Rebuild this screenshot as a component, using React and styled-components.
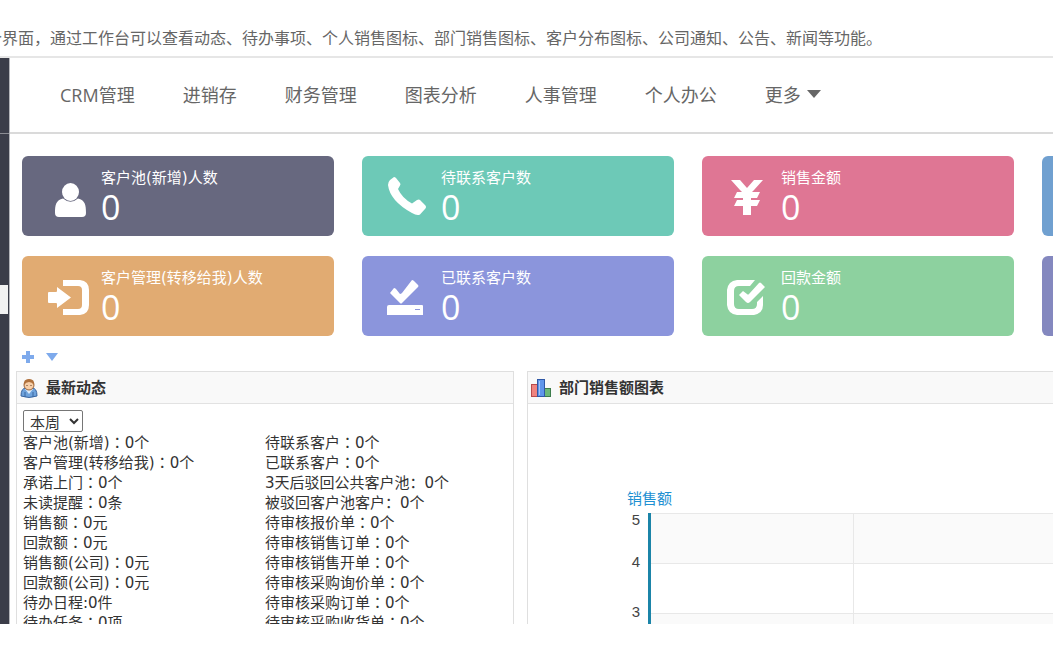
import React, { useState } from "react";
import styled, { createGlobalStyle } from "styled-components";

const navItems = ["CRM管理", "进销存", "财务管理", "图表分析", "人事管理", "个人办公"];

const cards = [
  { label: "客户池(新增)人数", value: 0, color: "#67687f", icon: "user" },
  { label: "待联系客户数", value: 0, color: "#6dc9b7", icon: "phone" },
  { label: "销售金额", value: 0, color: "#df7694", icon: "yen" },
  { label: "", value: "", color: "#70a0d0" },
  { label: "客户管理(转移给我)人数", value: 0, color: "#e1ab72", icon: "login" },
  { label: "已联系客户数", value: 0, color: "#8b95dc", icon: "saved" },
  { label: "回款金额", value: 0, color: "#8dd19f", icon: "check" },
  { label: "", value: "", color: "#8488bf" },
];

// [label, separator, value]
const leftRows = [
  ["客户池(新增)", "wide", "0个"],
  ["客户管理(转移给我)", "wide", "0个"],
  ["承诺上门", "wide", "0个"],
  ["未读提醒", "wide", "0条"],
  ["销售额", "wide", "0元"],
  ["回款额", "wide", "0元"],
  ["销售额(公司)", "wide", "0元"],
  ["回款额(公司)", "wide", "0元"],
  ["待办日程", "ascii", "0件"],
  ["待办任务", "wide", "0项"],
];

const rightRows = [
  ["待联系客户", "wide", "0个"],
  ["已联系客户", "wide", "0个"],
  ["3天后驳回公共客户池", "left", "0个"],
  ["被驳回客户池客户", "left", "0个"],
  ["待审核报价单", "wide", "0个"],
  ["待审核销售订单", "wide", "0个"],
  ["待审核销售开单", "wide", "0个"],
  ["待审核采购询价单", "wide", "0个"],
  ["待审核采购订单", "wide", "0个"],
  ["待审核采购收货单", "wide", "0个"],
];

// white glyphs shown on the stat cards
const cardIcons = {
  user: (
    <>
      <path d="M17 24.500 C10 26 9 31 9 39 Q9 43 13 43 H36 Q40 43 40 39 C40 31 39 26 32 24.500 Q24.500 31 17 24.500 Z" />
      <ellipse cx="24.500" cy="18" rx="8.500" ry="9" />
    </>
  ),
  phone: (
    <path d="M8 3 Q9 3 10 4 L14 9 Q15 10 14 11.500 L12 15 Q16 24 26 29.500 L31 26 Q33 25 34 26 L39 31 Q41 33 39 35 L34 40.500 Q31 42 26 39 Q4 27 2 11 Q2 8 4 6 Z" />
  ),
  yen: (
    <path d="M5 6 H14 L21 14 L28 6 H37 L28 16 L26 18 H34 L31 24 H25 V26 H34 L31 32 H25 V41 H17 V32 H8 L11 26 H17 V24 H8 L11 18 H16 L14 16 Z" />
  ),
  login: (
    <>
      <path d="M3 18 H10 Q11 18 11 17 V13 L25 23.500 L11 34 V30 Q11 29 10 29 H3 Q2 29 2 28 V19 Q2 18 3 18 Z" />
      <path d="M17 6 H34 Q43 7 43 16 V31 Q43 40 34 41 H17 V35 H32 Q36 35 36 31 V16 Q36 12 32 12 H17 Z" />
    </>
  ),
  saved: (
    <>
      <path d="M26 6 Q27 6 28 7 L32 11 Q33 12 32 13 L16 29 Q15 30 14 29 L4 19 L8 14 Q9 14 10 15 L14 20 Q15 20 16 19 Z" />
      <path fillRule="evenodd" d="M3 31 H36 Q37 31 37 32 V41 H1 V33 Q1 31 3 31 Z M29 35 V36 H34 V35 Z" />
    </>
  ),
  check: (
    <>
      <path d="M11 6 H29 L24 12 H13 Q8 12 8 17 V30 Q8 35 13 35 H26 Q31 35 31 30 V28 L37 22 V31 Q37 39 28 41 H11 Q2 40 1 31 V16 Q2 7 11 6 Z" />
      <path d="M33 9 Q34 8 35 9 L39 13 L24 28 Q22 30 20 28 L13 21 L17 17 L21 20 Q22 21 23 20 Z" />
    </>
  ),
};

function PersonIcon() {
  return (
    <svg width="18" height="20" viewBox="0 0 18 20" aria-hidden="true">
      <path d="M1 18 Q1 10 6 10 H12 Q17 10 17 18 Q9 21 1 18 Z" fill="#6fa3dc" stroke="#3b66a0" />
      <path d="M5 11 L9 16 L13 11 Z" fill="#dcecfb" />
      <path d="M5 14 V19 M13 14 V19" stroke="#3b66a0" />
      <ellipse cx="9" cy="7" rx="5" ry="5" fill="#f8cfa8" stroke="#9c6238" />
      <path d="M4 7 Q3 1 9 1 Q15 1 14 7 Q12 4 9 4 Q6 4 4 7 Z" fill="#b0713c" />
      <path d="M7 7 V8 M11 7 V8" stroke="#5c3a25" />
    </svg>
  );
}

function BarsIcon() {
  return (
    <svg width="20" height="18" viewBox="0 0 20 18" aria-hidden="true">
      <rect x="0.500" y="5.500" width="6" height="12" fill="#ef8480" stroke="#b84c4c" />
      <rect x="13.500" y="9.500" width="6" height="8" fill="#6cb878" stroke="#3d7c4b" />
      <rect x="6.500" y="0.500" width="7" height="17" fill="#5f95ea" stroke="#2f58a6" />
      <path d="M8.500 2 V16" stroke="#a3c5fa" />
    </svg>
  );
}

function SalesChart() {
  return (
    <Chart role="img" aria-label="部门销售额图表">
      <rect x="122" y="109" width="1000" height="50" fill="#fafafa" />
      <rect x="122" y="209" width="1000" height="50" fill="#fafafa" />
      <g fill="#e8e8e8">
        <rect x="122" y="109" width="1000" height="1" />
        <rect x="122" y="159" width="1000" height="1" />
        <rect x="122" y="209" width="1000" height="1" />
        <rect x="325" y="109" width="1" height="200" />
      </g>
      <rect x="120" y="109" width="3" height="200" fill="#1b84a8" />
      <text x="99" y="100" className="title">销售额</text>
      <text x="112" y="121" textAnchor="end">5</text>
      <text x="112" y="163" textAnchor="end">4</text>
      <text x="112" y="213" textAnchor="end">3</text>
    </Chart>
  );
}

function Rows({ rows }) {
  return (
    <List>
      {rows.map(([label, sep, value]) => (
        <li key={label}>
          {label}
          {sep === "wide" && <Colon>：</Colon>}
          {sep === "left" && "："}
          {sep === "ascii" && ":"}
          {value}
        </li>
      ))}
    </List>
  );
}

export default function App() {
  const [period, setPeriod] = useState("本周");

  return (
    <Page>
      <GlobalStyle />
      <Intro>
        <p>个界面，通过工作台可以查看动态、待办事项、个人销售图标、部门销售图标、客户分布图标、公司通知、公告、新闻等功能。</p>
      </Intro>
      <Frame>
        <Sidebar>
          <SidebarTop />
          <SidebarGap />
          <SidebarActive />
        </Sidebar>
        <Main>
          <Nav>
            {navItems.map((item) => (
              <a href="#" key={item}>{item}</a>
            ))}
            <button type="button">
              更多
              <svg width="14" height="8" viewBox="0 0 14 8" aria-hidden="true">
                <path d="M0 0 H14 L7 8 Z" fill="#666" />
              </svg>
            </button>
          </Nav>
          <Cards>
            {cards.map((card) => (
              <Card key={card.color} $color={card.color}>
                <svg width="48" height="48" viewBox="0 0 48 48" fill="#fff" aria-hidden="true">
                  {cardIcons[card.icon]}
                </svg>
                <div>
                  <CardLabel>{card.label}</CardLabel>
                  <CardValue>{card.value}</CardValue>
                </div>
              </Card>
            ))}
          </Cards>
          <Tools>
            <button type="button" aria-label="添加">
              <svg width="12" height="12" viewBox="0 0 12 12">
                <path d="M4 0 H8 V4 H12 V8 H8 V12 H4 V8 H0 V4 H4 Z" fill="#7eaaec" />
              </svg>
            </button>
            <button type="button" aria-label="展开">
              <svg width="12" height="8" viewBox="0 0 12 8">
                <path d="M0 0 H12 L6 8 Z" fill="#7eaaec" />
              </svg>
            </button>
          </Tools>
          <Panels>
            <Panel>
              <PanelHeader>
                <PersonIcon />
                <h2>最新动态</h2>
              </PanelHeader>
              <PanelBody>
                <select aria-label="时间范围" value={period} onChange={(e) => setPeriod(e.target.value)}>
                  <option>本周</option>
                  <option>本月</option>
                  <option>本年</option>
                </select>
                <Columns>
                  <Rows rows={leftRows} />
                  <Rows rows={rightRows} />
                </Columns>
              </PanelBody>
            </Panel>
            <Panel>
              <PanelHeader>
                <BarsIcon />
                <h2>部门销售额图表</h2>
              </PanelHeader>
              <SalesChart />
            </Panel>
          </Panels>
        </Main>
      </Frame>
    </Page>
  );
}

const GlobalStyle = createGlobalStyle`
  * {
    box-sizing: border-box;
  }
  body {
    margin: 0;
    background: #fff;
    color: #333;
    font-family: "Open Sans", "Noto Sans CJK SC", sans-serif;
    font-size: 15px;
  }
  button {
    display: flex;
    align-items: center;
    padding: 0;
    border: 0;
    background: none;
    color: inherit;
    font: inherit;
    cursor: pointer;
  }
`;

const Page = styled.div`
  display: flex;
  flex-direction: column;
  height: 100vh;
  padding: 0 3px 23px 0;
  overflow: hidden;
`;

const Intro = styled.header`
  display: flex;
  flex: none;
  height: 56px;
  padding-top: 25px;
  overflow: hidden;
  p {
    margin: 0 0 0 -14px;
    color: #666;
    font-family: "Noto Sans CJK SC", sans-serif;
    font-size: 16px;
    line-height: 24px;
    white-space: nowrap;
  }
`;

const Frame = styled.div`
  display: flex;
  flex: 1;
  min-height: 0;
  border-top: 2px solid #e6e6e6;
  overflow: hidden;
`;

const Sidebar = styled.aside`
  display: flex;
  flex: none;
  flex-direction: column;
  width: 10px;
  border-right: 1px solid #b4b5ba;
  background: #3b3d49;
`;

const SidebarTop = styled.div`
  height: 76px;
  border-bottom: 1px solid #8b8c93;
`;

const SidebarGap = styled.div`
  height: 151px;
`;

const SidebarActive = styled.div`
  width: 8px;
  height: 29px;
  background: #f2f2f2;
`;

const Main = styled.main`
  flex: 1;
  min-width: 0;
  overflow: hidden;
`;

const Nav = styled.nav`
  display: flex;
  align-items: center;
  gap: 48px;
  height: 76px;
  padding: 0 0 2px 50px;
  border-bottom: 2px solid #dadada;
  color: #666;
  font-size: 18px;
  white-space: nowrap;
  a {
    color: inherit;
    text-decoration: none;
  }
  button {
    gap: 6px;
  }
`;

const Cards = styled.section`
  display: grid;
  grid-template-columns: repeat(4, minmax(312px, 1fr));
  gap: 20px 28px;
  padding: 22px 12px 0;
`;

const Card = styled.div`
  display: flex;
  gap: 7px;
  height: 80px;
  padding-left: 24px;
  border-radius: 6px;
  background: ${(props) => props.$color};
  color: #fff;
  svg {
    flex: none;
    margin-top: 18px;
  }
`;

const CardLabel = styled.div`
  padding-top: 12px;
  font-family: "DejaVu Sans", "Noto Sans CJK SC", sans-serif;
  line-height: 20px;
`;

const CardValue = styled.div`
  font-size: 34px;
  line-height: 38px;
`;

const Tools = styled.div`
  display: flex;
  align-items: center;
  gap: 12px;
  height: 35px;
  padding: 7px 12px 0;
`;

const Panels = styled.section`
  display: grid;
  grid-template-columns: minmax(498px, 1fr) minmax(540px, 1fr);
  gap: 13px;
  padding: 0 6px;
`;

const Panel = styled.div`
  border: 1px solid #dfdfdf;
`;

const PanelHeader = styled.div`
  display: flex;
  align-items: center;
  gap: 8px;
  height: 32px;
  padding: 0 4px 0 3px;
  border-bottom: 1px solid #e2e2e2;
  background: #f9f9f9;
  h2 {
    margin: 0;
    padding-bottom: 2px;
    font-size: 15px;
    font-weight: 700;
    line-height: 20px;
  }
`;

const PanelBody = styled.div`
  padding: 6px;
  select {
    display: block;
    width: 60px;
    height: 22px;
    margin-bottom: 1px;
    padding-left: 2px;
    border: 1px solid #767676;
    border-radius: 2px;
    background: #fff;
    color: #333;
    font-family: inherit;
    font-size: 15px;
  }
`;

const Columns = styled.div`
  display: grid;
  grid-template-columns: 1fr 1fr;
`;

const List = styled.ul`
  margin: 0;
  padding: 0;
  list-style: none;
  font-family: "DejaVu Sans", "Noto Sans CJK SC", sans-serif;
  line-height: 20px;
  white-space: nowrap;
  li {
    height: 20px;
  }
`;

// colon centred in its cell
const Colon = styled.span`
  font-family: "Noto Sans CJK TC", sans-serif;
  line-height: 1;
`;

const Chart = styled.svg`
  display: block;
  width: 100%;
  height: 260px;
  text {
    fill: #444;
    font-family: "Liberation Sans", "Noto Sans CJK SC", sans-serif;
    font-size: 15px;
  }
  .title {
    fill: #1e90d2;
  }
`;
